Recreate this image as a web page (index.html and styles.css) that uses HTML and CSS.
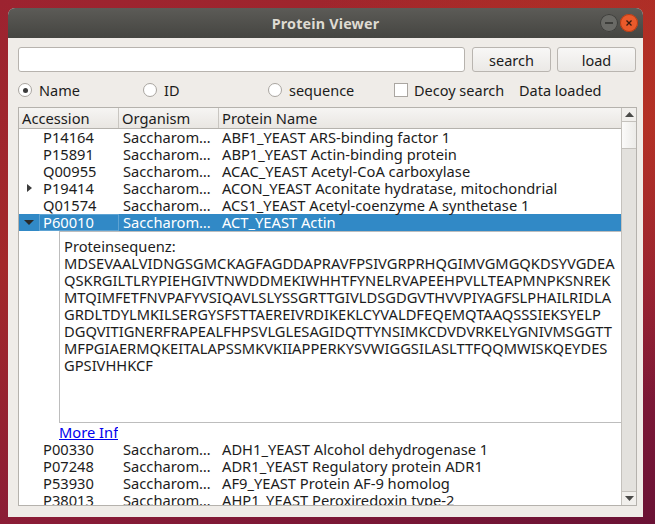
FILE: index.html
```html
<!DOCTYPE html>
<html>
<head>
<meta charset="utf-8">
<link rel="stylesheet" href="styles.css">
</head>
<body>
<div class="window">
  <div class="titlebar">
    <span class="title">Protein Viewer</span>
    <div class="wbtns">
      <span class="wbtn min"><svg width="18" height="18" viewBox="0 0 18 18"><path d="M5 9h8" stroke="#2f2f2d" stroke-width="1.5"/></svg></span>
      <span class="wbtn close"><svg width="18" height="18" viewBox="0 0 18 18"><path d="M6.5 6.5l5 5M11.5 6.5l-5 5" stroke="#3a1a0e" stroke-width="1.3"/></svg></span>
    </div>
  </div>
  <div class="content">
    <div class="searchrow">
      <div class="input"></div>
      <div class="btn">search</div>
      <div class="btn">load</div>
    </div>
    <div class="optrow">
      <div class="opt o-name"><span class="radio checked"></span>Name</div>
      <div class="opt o-id"><span class="radio"></span>ID</div>
      <div class="opt o-seq"><span class="radio"></span>sequence</div>
      <div class="opt o-decoy"><span class="check"></span>Decoy search</div>
      <div class="opt o-status">Data loaded</div>
    </div>
    <div class="table">
      <div class="tmain">
        <div class="thead">
          <div class="hc c1">Accession</div>
          <div class="hc c2">Organism</div>
          <div class="hc c3">Protein Name</div>
        </div>
        <div class="tbody">
          <div class="row"><div class="c1 acc">P14164</div><div class="c2">Saccharom…</div><div class="c3">ABF1_YEAST ARS-binding factor 1</div></div>
          <div class="row"><div class="c1 acc">P15891</div><div class="c2">Saccharom…</div><div class="c3">ABP1_YEAST Actin-binding protein</div></div>
          <div class="row"><div class="c1 acc">Q00955</div><div class="c2">Saccharom…</div><div class="c3">ACAC_YEAST Acetyl-CoA carboxylase</div></div>
          <div class="row"><div class="c1 acc"><span class="arrow right"></span>P19414</div><div class="c2">Saccharom…</div><div class="c3">ACON_YEAST Aconitate hydratase, mitochondrial</div></div>
          <div class="row"><div class="c1 acc">Q01574</div><div class="c2">Saccharom…</div><div class="c3">ACS1_YEAST Acetyl-coenzyme A synthetase 1</div></div>
          <div class="row selected"><div class="c1 acc"><span class="arrow down"></span><span class="focus">P60010</span></div><div class="c2">Saccharom…</div><div class="c3">ACT_YEAST Actin</div></div>
          <div class="detail">
            <div class="seqbox">
              <div>Proteinsequenz:</div>
              <div>MDSEVAALVIDNGSGMCKAGFAGDDAPRAVFPSIVGRPRHQGIMVGMGQKDSYVGDEA</div>
              <div>QSKRGILTLRYPIEHGIVTNWDDMEKIWHHTFYNELRVAPEEHPVLLTEAPMNPKSNREK</div>
              <div>MTQIMFETFNVPAFYVSIQAVLSLYSSGRTTGIVLDSGDGVTHVVPIYAGFSLPHAILRIDLA</div>
              <div>GRDLTDYLMKILSERGYSFSTTAEREIVRDIKEKLCYVALDFEQEMQTAAQSSSIEKSYELP</div>
              <div>DGQVITIGNERFRAPEALFHPSVLGLESAGIDQTTYNSIMKCDVDVRKELYGNIVMSGGTT</div>
              <div>MFPGIAERMQKEITALAPSSMKVKIIAPPERKYSVWIGGSILASLTTFQQMWISKQEYDES</div>
              <div>GPSIVHHKCF</div>
            </div>
            <div class="linkrow"><a class="more">More Info</a></div>
          </div>
          <div class="row"><div class="c1 acc">P00330</div><div class="c2">Saccharom…</div><div class="c3">ADH1_YEAST Alcohol dehydrogenase 1</div></div>
          <div class="row"><div class="c1 acc">P07248</div><div class="c2">Saccharom…</div><div class="c3">ADR1_YEAST Regulatory protein ADR1</div></div>
          <div class="row"><div class="c1 acc">P53930</div><div class="c2">Saccharom…</div><div class="c3">AF9_YEAST Protein AF-9 homolog</div></div>
          <div class="row"><div class="c1 acc">P38013</div><div class="c2">Saccharom…</div><div class="c3">AHP1_YEAST Peroxiredoxin type-2</div></div>
        </div>
      </div>
      <div class="sbar">
        <div class="sarrow"><svg width="9" height="5" viewBox="0 0 9 5"><path d="M0 5L4.5 0L9 5z" fill="#4a4a48"/></svg></div>
        <div class="sthumb"></div>
        <div class="strack"></div>
        <div class="sarrow bottom"><svg width="9" height="5" viewBox="0 0 9 5"><path d="M0 0L4.5 5L9 0z" fill="#4a4a48"/></svg></div>
      </div>
    </div>
  </div>
</div>
</body>
</html>
```

FILE: styles.css
```css
html, body {
  margin: 0;
  padding: 0;
  width: 655px;
  height: 524px;
  overflow: hidden;
}
body {
  background:
    radial-gradient(ellipse 500px 400px at 640px 120px, rgba(200, 60, 30, 0.55), rgba(200,60,30,0) 70%),
    linear-gradient(160deg, #9c2330 0%, #a3282a 35%, #8a1c36 70%, #6a1235 100%);
  font-family: "Noto Sans", "Open Sans", sans-serif;
  font-size: 14.7px;
  color: #1c1c1c;
}
.window {
  margin: 8px 0 0 8px;
  width: 635px;
  height: 509px;
  display: flex;
  flex-direction: column;
  background: #efece8;
  border-radius: 7px 7px 0 0;
  overflow: hidden;
}
.titlebar {
  height: 30px;
  flex: none;
  background: linear-gradient(#5c5b57, #454541);
  display: flex;
  align-items: center;
  justify-content: center;
  position: relative;
}
.title {
  color: #dfdbd2;
  font-weight: bold;
  font-size: 14.3px;
  letter-spacing: 0.2px;
}
.wbtns {
  position: absolute;
  right: 5px;
  top: 6px;
  display: flex;
  gap: 2px;
}
.wbtn {
  width: 18px;
  height: 18px;
  border-radius: 50%;
  display: block;
}
.wbtn svg { display: block; }
.min { background: #6a6a66; box-shadow: inset 0 0 0 1px #3d3d3a; }
.close { background: #ea5a2b; box-shadow: inset 0 0 0 1px #b23c16; }
.content {
  flex: 1;
  padding: 9px 6px 11px 10px;
  display: flex;
  flex-direction: column;
  min-height: 0;
}
.searchrow {
  display: flex;
  height: 25px;
  gap: 7px;
}
.input {
  width: 445px;
  border: 1px solid #b7b3ae;
  border-radius: 3px;
  background: #fff;
}
.btn {
  width: 77px;
  border: 1px solid #b9b5b0;
  border-radius: 3px;
  background: linear-gradient(#f8f7f6, #ebe9e6);
  display: flex;
  align-items: center;
  justify-content: center;
  font-size: 14.5px;
}
.btn + .btn { margin-left: -1px; }
.optrow {
  height: 20px;
  margin-top: 8px;
  margin-bottom: 7px;
  display: flex;
  align-items: center;
  font-size: 14.5px;
}
.opt { display: flex; align-items: center; white-space: nowrap; }
.o-name { width: 125px; }
.o-id { width: 125px; }
.o-seq { width: 126px; }
.o-decoy { width: 125px; }
.radio {
  width: 12px;
  height: 12px;
  border: 1px solid #a9a5a0;
  border-radius: 50%;
  background: #fff;
  margin: 0 7px 0 0;
  box-sizing: content-box;
  display: flex;
  align-items: center;
  justify-content: center;
}
.radio.checked::after {
  content: "";
  width: 5px;
  height: 5px;
  border-radius: 50%;
  background: #3c3c3c;
}
.check {
  width: 12px;
  height: 12px;
  border: 1px solid #aaa6a1;
  background: #fff;
  margin-right: 6px;
}
.table {
  flex: 1;
  min-height: 0;
  display: flex;
  border: 1px solid #b5b2ad;
  background: #fff;
}
.tmain {
  flex: 1;
  display: flex;
  flex-direction: column;
  min-width: 0;
}
.thead {
  height: 20px;
  flex: none;
  display: flex;
  background: linear-gradient(#f6f5f3, #e9e6e2);
  border-bottom: 1px solid #b5b2ad;
  line-height: 20px;
}
.hc { padding-left: 3px; box-sizing: border-box; white-space: nowrap; }
.c1 { width: 100px; flex: none; }
.c2 { width: 100px; flex: none; }
.c3 { flex: 1; }
.thead .c1, .thead .c2 { border-right: 1px solid #c9c6c1; }
.thead .c2 { padding-left: 3px; }
.tbody {
  flex: 1;
  overflow: hidden;
}
.row {
  display: flex;
  height: 17px;
  line-height: 17px;
  white-space: nowrap;
}
.row .c1 { padding-left: 24px; box-sizing: border-box; position: relative; }
.row .c2 { padding-left: 4px; box-sizing: border-box; overflow: hidden; }
.row .c3 { padding-left: 3px; }
.row.selected { background: #3189c6; color: #fff; }
.focus {
  position: absolute;
  left: 20px;
  top: 0;
  right: 0;
  bottom: 0;
  padding-left: 3px;
  border: 1px solid #5ea3d3;
  line-height: 15px;
}
.arrow {
  position: absolute;
  left: 7px;
  top: 5px;
  width: 0;
  height: 0;
}
.arrow.right {
  border-left: 5px solid #3c3c3c;
  border-top: 4px solid transparent;
  border-bottom: 4px solid transparent;
  top: 4px;
  left: 8px;
}
.arrow.down {
  border-top: 5px solid #2a2a2a;
  border-left: 5px solid transparent;
  border-right: 5px solid transparent;
  top: 6px;
  left: 5px;
}
.detail {
  padding-left: 40px;
}
.seqbox {
  height: 184px;
  border: 1px solid #bdbdbd;
  border-right: none;
  padding: 6px 0 0 4px;
  line-height: 17px;
  white-space: nowrap;
}
.linkrow {
  height: 18px;
  line-height: 18px;
  width: 59px;
  overflow: hidden;
  white-space: nowrap;
}
.more {
  color: #0000ee;
  text-decoration: underline;
}
.sbar {
  width: 14px;
  flex: none;
  border-left: 1px solid #c4c1bc;
  display: flex;
  flex-direction: column;
  background: #e3e1dd;
}
.sarrow {
  height: 13px;
  flex: none;
  display: flex;
  align-items: center;
  justify-content: center;
  background: #f1efec;
  border-bottom: 1px solid #c4c1bc;
}
.sarrow.bottom { border-bottom: none; border-top: 1px solid #c4c1bc; }
.sthumb {
  height: 26px;
  flex: none;
  background: linear-gradient(90deg, #fbfaf9, #ecebe8);
  border-bottom: 1px solid #c4c1bc;
}
.strack { flex: 1; }
```
